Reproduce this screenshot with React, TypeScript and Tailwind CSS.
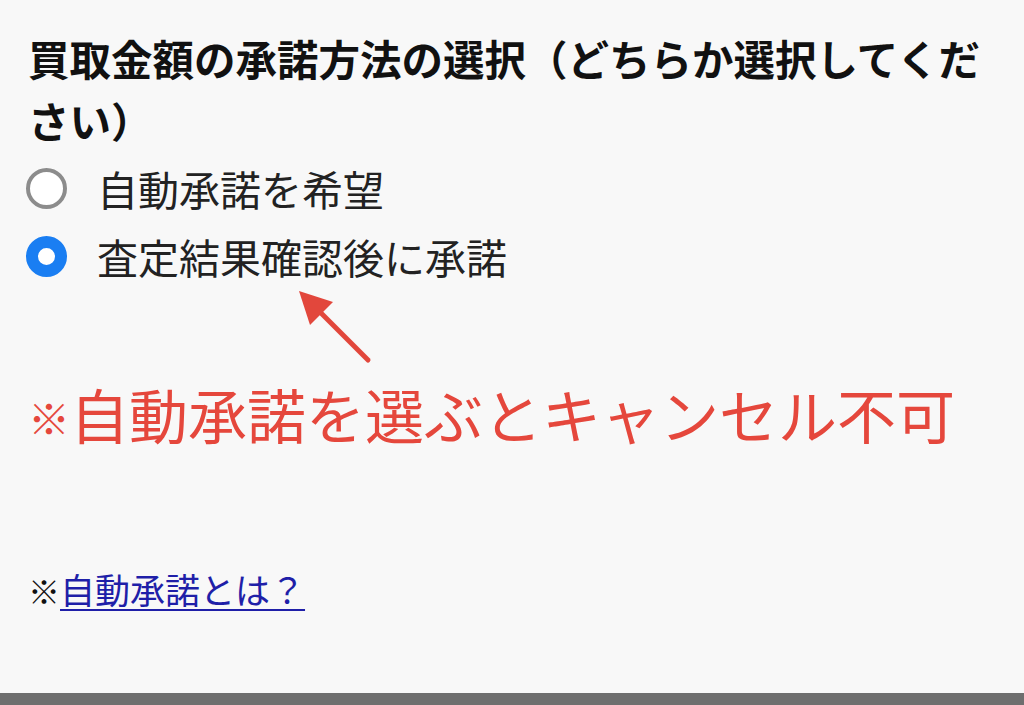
import { useState } from "react";

const OPTIONS = [
  { id: "auto", label: "自動承諾を希望" },
  { id: "manual", label: "査定結果確認後に承諾" },
];

const FONT = { fontFamily: '"Noto Sans CJK JP", "Noto Sans", sans-serif' };

function Radio({ checked }: { checked: boolean }) {
  return (
    <span
      className={`shrink-0 w-[41px] h-[41px] rounded-full bg-white ${
        checked ? "border-[12px] border-[#1a7ef2]" : "border-[4px] border-[#8c8c8c]"
      }`}
    />
  );
}

export default function App() {
  const [choice, setChoice] = useState("manual");

  return (
    <div className="h-screen flex flex-col bg-[#f8f8f8] text-[#111]" style={FONT}>
      <main className="flex-1 pl-[28px] pr-[20px] pt-[27px]">
        <h2 className="text-[41.5px] leading-[62px] font-bold">
          買取金額の承諾方法の選択（どちらか選択してください）
        </h2>

        <div className="mt-[3px]">
          {OPTIONS.map((opt) => (
            <label
              key={opt.id}
              className="h-[68px] flex items-center gap-[30px] cursor-pointer -ml-[2px]"
              onClick={() => setChoice(opt.id)}
            >
              <Radio checked={choice === opt.id} />
              <span className="text-[41px] leading-none text-[#222]">{opt.label}</span>
            </label>
          ))}
        </div>

        <svg width="120" height="92" viewBox="0 0 120 92" className="block ml-[252px]">
          <line x1="88" y1="70" x2="30" y2="12" stroke="#e2473c" strokeWidth="5" strokeLinecap="round" />
          <polygon points="19,1 53,12 30,35" fill="#e2473c" />
        </svg>

        <p className="text-[59px] leading-[70px] text-[#e5473c] -mt-[3px]">
          <span className="text-[42px] font-bold align-[4px]">※</span>
          自動承諾を選ぶとキャンセル不可
        </p>

        <p className="mt-[112px] text-[35px] leading-[50px] text-[#111]">
          <span className="text-[32px]">※</span>
          <a href="#" className="text-[#1f1fa8] underline underline-offset-[5px] decoration-[2px]">
            自動承諾とは？
          </a>
        </p>
      </main>
      <div className="h-[12px] bg-[#6e6e6e]" />
    </div>
  );
}
